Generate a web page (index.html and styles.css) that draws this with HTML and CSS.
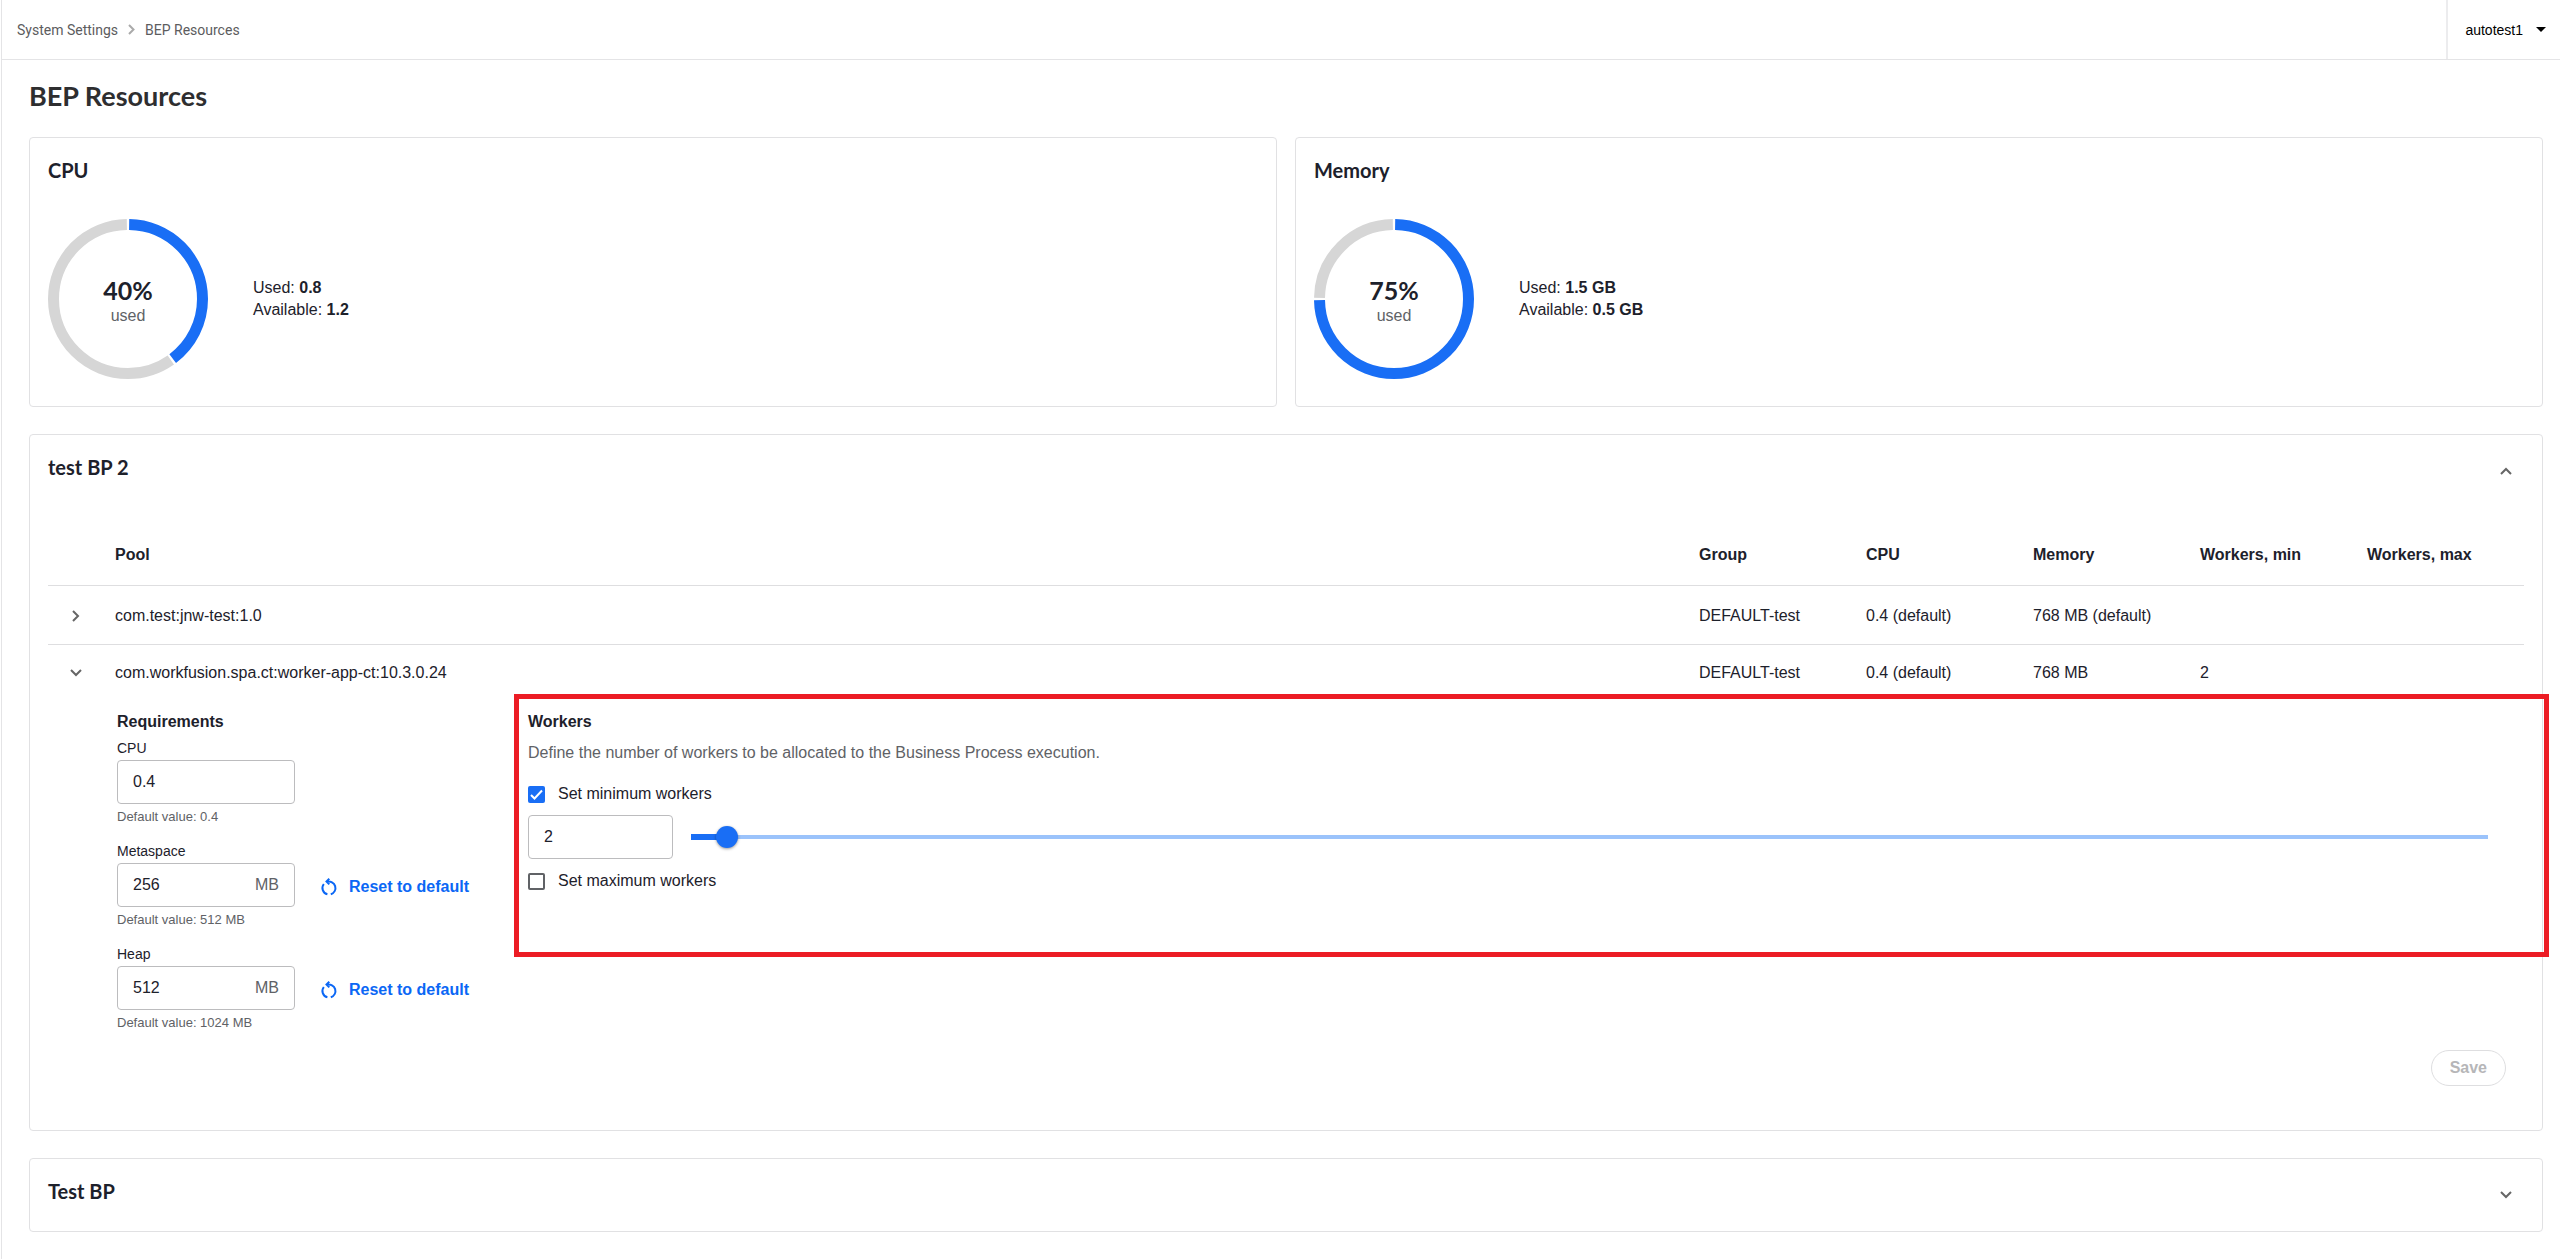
FILE: index.html
```
<!DOCTYPE html>
<html lang="en">
<head>
<meta charset="UTF-8" />
<title>BEP Resources</title>
<link rel="stylesheet" href="styles.css">
</head>
<body>
<header class="topbar">
	<nav class="breadcrumb">
		<a href="#">System Settings</a>
		<svg width="7" height="11" viewBox="0 0 7 11"><path d="M1 1l4.500 4.500L1 10" /></svg>
		<a href="#">BEP Resources</a>
	</nav>
	<button class="user" type="button">autotest1
		<svg width="10" height="5" viewBox="0 0 10 5"><path d="M0 0h10L5 5z" /></svg>
	</button>
</header>

<main>
<h1>BEP Resources</h1>

<div class="usage">
	<section class="card">
		<h2>CPU</h2>
		<div class="usage-body">
			<div class="donut">
				<svg viewBox="0 0 160 160">
					<circle class="used" cx="80" cy="80" r="74.500" pathLength="100" stroke-dasharray="39.500 60.500" stroke-dashoffset="-0.250" />
					<circle class="free" cx="80" cy="80" r="74.500" pathLength="100" stroke-dasharray="59.500 40.500" stroke-dashoffset="-40.250" />
				</svg>
				<div class="donut-text"><strong>40%</strong><span>used</span></div>
			</div>
			<p>Used: <b>0.8</b><br>Available: <b>1.2</b></p>
		</div>
	</section>
	<section class="card">
		<h2>Memory</h2>
		<div class="usage-body">
			<div class="donut">
				<svg viewBox="0 0 160 160">
					<circle class="used" cx="80" cy="80" r="74.500" pathLength="100" stroke-dasharray="74.500 25.500" stroke-dashoffset="-0.250" />
					<circle class="free" cx="80" cy="80" r="74.500" pathLength="100" stroke-dasharray="24.500 75.500" stroke-dashoffset="-75.250" />
				</svg>
				<div class="donut-text"><strong>75%</strong><span>used</span></div>
			</div>
			<p>Used: <b>1.5 GB</b><br>Available: <b>0.5 GB</b></p>
		</div>
	</section>
</div>

<section class="card process">
	<div class="card-head">
		<h2>test BP 2</h2>
		<button class="toggle" type="button" aria-label="Collapse"><svg width="12" height="8" viewBox="0 0 12 8"><path d="M1 7l5-5 5 5" /></svg></button>
	</div>

	<table>
		<thead>
			<tr>
				<th class="col-toggle"></th>
				<th>Pool</th>
				<th class="col">Group</th>
				<th class="col">CPU</th>
				<th class="col">Memory</th>
				<th class="col">Workers, min</th>
				<th class="col">Workers, max</th>
			</tr>
		</thead>
		<tbody>
			<tr>
				<td><button class="toggle" type="button" aria-label="Expand"><svg width="8" height="12" viewBox="0 0 8 12"><path d="M1 1l5 5-5 5" /></svg></button></td>
				<td>com.test:jnw-test:1.0</td>
				<td>DEFAULT-test</td>
				<td>0.4 (default)</td>
				<td>768 MB (default)</td>
				<td></td>
				<td></td>
			</tr>
			<tr class="open">
				<td><button class="toggle" type="button" aria-label="Collapse"><svg width="12" height="8" viewBox="0 0 12 8"><path d="M1 1l5 5 5-5" /></svg></button></td>
				<td>com.workfusion.spa.ct:worker-app-ct:10.3.0.24</td>
				<td>DEFAULT-test</td>
				<td>0.4 (default)</td>
				<td>768 MB</td>
				<td>2</td>
				<td></td>
			</tr>
			<tr class="details">
				<td colspan="7">
					<form>
						<div class="requirements">
							<h3>Requirements</h3>
							<div class="field">
								<label for="cpu">CPU</label>
								<div class="row"><div class="box"><input type="text" id="cpu" value="0.4"/></div></div>
								<small>Default value: 0.4</small>
							</div>
							<div class="field">
								<label for="metaspace">Metaspace</label>
								<div class="row">
									<div class="box"><input type="text" id="metaspace" value="256"/><span>MB</span></div>
									<button class="reset" type="button"><svg width="18" height="18" viewBox="0 0 18 18"><path d="M7 3.800A6.500 6.500 0 0 1 10.800 16.300M7.400 16.300A6.500 6.500 0 0 1 3.800 6M9.300 0.800L6.500 3.600l2.800 2.800" /></svg>Reset to default</button>
								</div>
								<small>Default value: 512 MB</small>
							</div>
							<div class="field">
								<label for="heap">Heap</label>
								<div class="row">
									<div class="box"><input type="text" id="heap" value="512"/><span>MB</span></div>
									<button class="reset" type="button"><svg width="18" height="18" viewBox="0 0 18 18"><path d="M7 3.800A6.500 6.500 0 0 1 10.800 16.300M7.400 16.300A6.500 6.500 0 0 1 3.800 6M9.300 0.800L6.500 3.600l2.800 2.800" /></svg>Reset to default</button>
								</div>
								<small>Default value: 1024 MB</small>
							</div>
						</div>

						<div class="workers">
							<h3>Workers</h3>
							<p>Define the number of workers to be allocated to the Business Process execution.</p>
							<label class="check"><input type="checkbox" checked />Set minimum workers</label>
							<div class="slider-row">
								<div class="box"><input type="text" aria-label="Minimum workers" value="2"/></div>
								<input type="range" aria-label="Minimum workers slider" min="1" max="72" value="2" />
							</div>
							<label class="check"><input type="checkbox" />Set maximum workers</label>
						</div>

						<div class="actions"><button class="save" type="button" disabled>Save</button></div>
					</form>
				</td>
			</tr>
		</tbody>
	</table>
</section>

<section class="card">
	<div class="card-head">
		<h2>Test BP</h2>
		<button class="toggle" type="button" aria-label="Expand"><svg width="12" height="8" viewBox="0 0 12 8"><path d="M1 1l5 5 5-5" /></svg></button>
	</div>
</section>
</main>
</body>
</html>
```
FILE: styles.css
```
* {
	margin: 0;
	padding: 0;
	box-sizing: border-box;
}

body {
	min-height: 100vh;
	margin-left: 1px;
	border-left: 1px solid #e4e4e6;
	background: #fff;
	color: #1d212b;
	font: 16px/22px "Liberation Sans", Arial, sans-serif;
}

svg {
	display: block;
	fill: none;
	stroke: #666;
	stroke-width: 2;
}

button {
	border: none;
	background: none;
	font: inherit;
	cursor: pointer;
}

.topbar {
	display: flex;
	justify-content: space-between;
	height: 60px;
	border-bottom: 1px solid #e4e4e6;
}

.breadcrumb {
	display: flex;
	align-items: center;
	gap: 10px;
	padding-left: 15px;
	font: 14px/20px Roboto, sans-serif;
}

.breadcrumb a {
	color: #5c5c5e;
	text-decoration: none;
}

.breadcrumb svg {
	stroke: #aaa;
}

.user {
	display: flex;
	align-items: center;
	gap: 13px;
	padding: 0 14px 0 17px;
	border-left: 2px solid #ececee;
	color: #000;
	font-size: 14px;
}

.user svg {
	fill: #000;
	stroke: none;
}

main {
	padding: 19px 17px 27px 27px;
}

h1, h2, .donut strong {
	font-family: Lato, sans-serif;
	font-weight: bold;
}

h1 {
	margin-bottom: 24px;
	color: #2e2e30;
	font-size: 27px;
	line-height: 34px;
}

h2 {
	font-size: 20px;
	line-height: 28px;
}

h3 {
	font-size: 16px;
	line-height: 22px;
}

.card {
	border: 1px solid #e1e1e3;
	border-radius: 4px;
	padding: 18px;
}

.usage {
	display: grid;
	grid-template-columns: 1fr 1fr;
	gap: 18px;
	margin-bottom: 27px;
}

.usage .card {
	padding-bottom: 27px;
}

.usage-body {
	display: flex;
	align-items: center;
	gap: 45px;
	margin-top: 35px;
}

.donut {
	display: grid;
	width: 160px;
	height: 160px;
}

.donut svg, .donut-text {
	grid-area: 1 / 1;
}

.donut svg {
	transform: rotate(-90deg);
}

.donut circle {
	stroke-width: 11;
}

.donut .used {
	stroke: #196ef5;
}

.donut .free {
	stroke: #d6d6d6;
}

.donut-text {
	display: flex;
	flex-direction: column;
	justify-content: center;
	padding-top: 4px;
	text-align: center;
}

.donut strong {
	font-size: 25px;
	line-height: 30px;
}

.donut span {
	color: #606266;
}

.card-head {
	display: flex;
	justify-content: space-between;
	height: 36px;
}

.toggle {
	display: flex;
	align-items: center;
	justify-content: center;
	width: 36px;
	height: 36px;
}

.process {
	margin-bottom: 27px;
	padding-bottom: 44px;
}

table {
	width: 100%;
	margin-top: 37px;
	border-collapse: collapse;
	table-layout: fixed;
}

th, td {
	height: 59px;
	padding: 0 0 0 10px;
	border-bottom: 1px solid #dedee0;
	text-align: left;
}

td {
	padding-top: 2px;
}

.open td, .details td {
	border: none;
}

.open td {
	height: 56px;
}

.col-toggle {
	width: 57px;
}

.col {
	width: 167px;
}

.details td {
	padding: 11px 18px 0 69px;
}

form {
	display: grid;
	grid-template-columns: 411px 1fr;
}

.field {
	margin-bottom: 13px;
}

label, small {
	display: block;
	font-size: 14px;
	line-height: 22px;
}

.field label {
	margin: 5px 0 2px;
	line-height: 20px;
}

small {
	margin-top: 2px;
	color: #606266;
	font-size: 13px;
}

.row {
	display: flex;
	align-items: center;
	gap: 25px;
}

.box {
	display: flex;
	align-items: center;
	width: 178px;
	height: 44px;
	padding: 0 15px;
	border: 1px solid #bcbcbe;
	border-radius: 4px;
}

.box input {
	flex: 1;
	min-width: 0;
	border: none;
	outline: none;
	background: none;
	color: inherit;
	font: inherit;
}

.box span {
	color: #606266;
}

.reset {
	display: flex;
	align-items: center;
	gap: 11px;
	padding-top: 3px;
	color: #0b67f5;
	font-weight: bold;
}

.reset svg {
	stroke: #0b67f5;
}

.workers {
	position: relative;
}

/* highlight frame, runs past the card's right edge */
.workers::after {
	content: "";
	position: absolute;
	inset: -17px -43px auto -14px;
	height: 253px;
	border: 5px solid #ec1c24;
	pointer-events: none;
}

.workers p {
	margin: 9px 0 19px;
	color: #606266;
}

.check {
	display: flex;
	align-items: center;
	gap: 13px;
	font-size: 16px;
}

.check input {
	appearance: none;
	width: 17px;
	height: 17px;
	border: 2px solid #606266;
	border-radius: 2px;
}

.check input:checked {
	border: none;
	background: #196ef5 url("data:image/svg+xml,%3Csvg xmlns='http://www.w3.org/2000/svg' viewBox='0 0 17 17'%3E%3Cpath d='M3 9l3.500 3.500L14 4.500' fill='none' stroke='%23fff' stroke-width='2'/%3E%3C/svg%3E");
}

.slider-row {
	display: flex;
	align-items: center;
	gap: 18px;
	margin: 10px 0 11px;
}

.slider-row .box {
	width: 145px;
}

input[type=range] {
	appearance: none;
	flex: 1;
	height: 22px;
	margin-right: 18px;
	border-radius: 3px;
	background:
		linear-gradient(#196ef5, #196ef5) 0 50% / 30px 6px no-repeat,
		linear-gradient(#9bc3fb, #9bc3fb) 0 50% / 100% 4px no-repeat;
}

input[type=range]::-webkit-slider-thumb {
	appearance: none;
	width: 22px;
	height: 22px;
	border-radius: 50%;
	background: #196ef5;
	box-shadow: 0 1px 3px rgba(0, 0, 0, .4);
}

.actions {
	grid-column: 1 / -1;
	display: flex;
	justify-content: flex-end;
	margin-top: 3px;
}

.save {
	padding: 6px 18px;
	border: 1px solid #dedee0;
	border-radius: 18px;
	color: #b6b6b8;
	font-weight: bold;
}
```
